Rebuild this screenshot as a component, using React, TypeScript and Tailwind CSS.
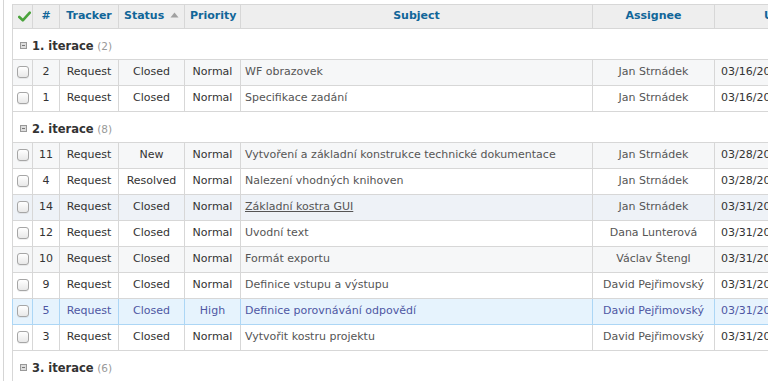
import React from "react";

type Issue = {
  id: number;
  status: string;
  priority: string;
  subject: string;
  assignee: string;
  updated: string;
  hover?: boolean;
  high?: boolean;
};

type Group = { name: string; count: number; issues: Issue[] };

const groups: Group[] = [
  {
    name: "1. iterace",
    count: 2,
    issues: [
      { id: 2, status: "Closed", priority: "Normal", subject: "WF obrazovek", assignee: "Jan Strnádek", updated: "03/16/2015 10:12 PM" },
      { id: 1, status: "Closed", priority: "Normal", subject: "Specifikace zadání", assignee: "Jan Strnádek", updated: "03/16/2015 10:10 PM" },
    ],
  },
  {
    name: "2. iterace",
    count: 8,
    issues: [
      { id: 11, status: "New", priority: "Normal", subject: "Vytvoření a základní konstrukce technické dokumentace", assignee: "Jan Strnádek", updated: "03/28/2015 04:20 PM" },
      { id: 4, status: "Resolved", priority: "Normal", subject: "Nalezení vhodných knihoven", assignee: "Jan Strnádek", updated: "03/28/2015 04:18 PM" },
      { id: 14, status: "Closed", priority: "Normal", subject: "Základní kostra GUI", assignee: "Jan Strnádek", updated: "03/31/2015 09:40 PM", hover: true },
      { id: 12, status: "Closed", priority: "Normal", subject: "Uvodní text", assignee: "Dana Lunterová", updated: "03/31/2015 09:38 PM" },
      { id: 10, status: "Closed", priority: "Normal", subject: "Formát exportu", assignee: "Václav Štengl", updated: "03/31/2015 09:37 PM" },
      { id: 9, status: "Closed", priority: "Normal", subject: "Definice vstupu a výstupu", assignee: "David Pejřimovský", updated: "03/31/2015 09:36 PM" },
      { id: 5, status: "Closed", priority: "High", subject: "Definice porovnávání odpovědí", assignee: "David Pejřimovský", updated: "03/31/2015 09:35 PM", high: true },
      { id: 3, status: "Closed", priority: "Normal", subject: "Vytvořit kostru projektu", assignee: "David Pejřimovský", updated: "03/31/2015 09:34 PM" },
    ],
  },
  { name: "3. iterace", count: 6, issues: [] },
];

function CheckBox() {
  return (
    <span className="inline-block w-[12px] h-[12px] rounded-[3px] border border-[#a6a6a6] bg-gradient-to-b from-white to-[#e8e8e8] shadow-[0_1px_0_rgba(0,0,0,0.06)] align-middle" />
  );
}

function Toggle() {
  return (
    <span className="inline-flex items-center justify-center w-[7px] h-[7px] border border-[#999] bg-[#ddd] mr-[5px] align-middle relative -top-[1px]">
      <span className="block w-[3px] h-px bg-[#777]" />
    </span>
  );
}

const th = "border border-[#d7d7d7] bg-[#eeeeee] text-[#116699] font-bold h-[24px] px-[5px] text-center whitespace-nowrap";

export default function App() {
  let rowIndex = 0;
  return (
    <div
      className="w-[768px] h-[381px] overflow-hidden bg-white pl-[3px]"
      style={{ fontFamily: '"DejaVu Sans", Verdana, sans-serif' }}
    >
      <div className="h-full border-l border-[#d5d5d5] pl-[8px] pt-[4px]">
        <table className="table-fixed border-collapse w-[840px] text-[11px] text-[#333]">
          <colgroup>
            <col className="w-[20px]" />
            <col className="w-[27px]" />
            <col className="w-[59px]" />
            <col className="w-[66px]" />
            <col className="w-[56px]" />
            <col className="w-[352px]" />
            <col className="w-[122px]" />
            <col className="w-[138px]" />
          </colgroup>
          <thead>
            <tr>
              <th className={th + " px-0"}>
                <svg width="13" height="11" viewBox="0 0 13 11" className="inline-block align-middle">
                  <path d="M1.3 6 L4.8 9.3 L11.8 1.6" fill="none" stroke="#4aa33c" strokeWidth="2.6" strokeLinecap="round" strokeLinejoin="round" />
                </svg>
              </th>
              <th className={th + " px-0"}>#</th>
              <th className={th}>Tracker</th>
              <th className={th}>
                Status
                <svg width="9" height="6" viewBox="0 0 9 6" className="inline-block ml-[6px] align-middle relative -top-[1px]">
                  <path d="M0.5 5.5 L4.5 0.5 L8.5 5.5 Z" fill="#a0a0a0" />
                </svg>
              </th>
              <th className={th}>Priority</th>
              <th className={th}>Subject</th>
              <th className={th}>Assignee</th>
              <th className={th + " text-left pl-[49px]"}>Updated</th>
            </tr>
          </thead>
          <tbody>
            {groups.map((g) => (
              <React.Fragment key={g.name}>
                <tr>
                  <td
                    colSpan={8}
                    className="h-[31px] border-l border-b border-[#d7d7d7] pl-[7px] pt-[7px] pb-[2px] align-middle"
                  >
                    <Toggle />
                    <span className="font-bold text-[11.5px] text-[#333]">{g.name}</span>{" "}
                    <span className="text-[10.5px] text-[#999]">({g.count})</span>
                  </td>
                </tr>
                {g.issues.map((i) => {
                  const odd = rowIndex++ % 2 === 0;
                  const bg = i.high ? "bg-[#e6f3fd]" : i.hover ? "bg-[#eef2f7]" : odd ? "bg-[#f6f7f8]" : "bg-white";
                  const bd = i.high ? "border-[#acd6f5]" : "border-[#d7d7d7]";
                  const txt = i.high ? "text-[#4e57a3]" : "";
                  const td = `border ${bd} h-[26px] px-[4px] whitespace-nowrap overflow-hidden ${txt}`;
                  return (
                    <tr key={i.id} className={bg}>
                      <td className={td + " text-center px-0"}>
                        <CheckBox />
                      </td>
                      <td className={td + " text-center"}>{i.id}</td>
                      <td className={td + " text-center"}>Request</td>
                      <td className={td + " text-center"}>{i.status}</td>
                      <td className={td + " text-center"}>{i.priority}</td>
                      <td className={td + " text-left " + (i.high ? "" : "text-[#555]")}>
                        <span className={i.hover ? "underline" : ""}>{i.subject}</span>
                      </td>
                      <td className={td + " text-center " + (i.high ? "" : "text-[#555]")}>{i.assignee}</td>
                      <td className={td + " text-left pl-[6px]"}>{i.updated}</td>
                    </tr>
                  );
                })}
              </React.Fragment>
            ))}
          </tbody>
        </table>
      </div>
    </div>
  );
}
